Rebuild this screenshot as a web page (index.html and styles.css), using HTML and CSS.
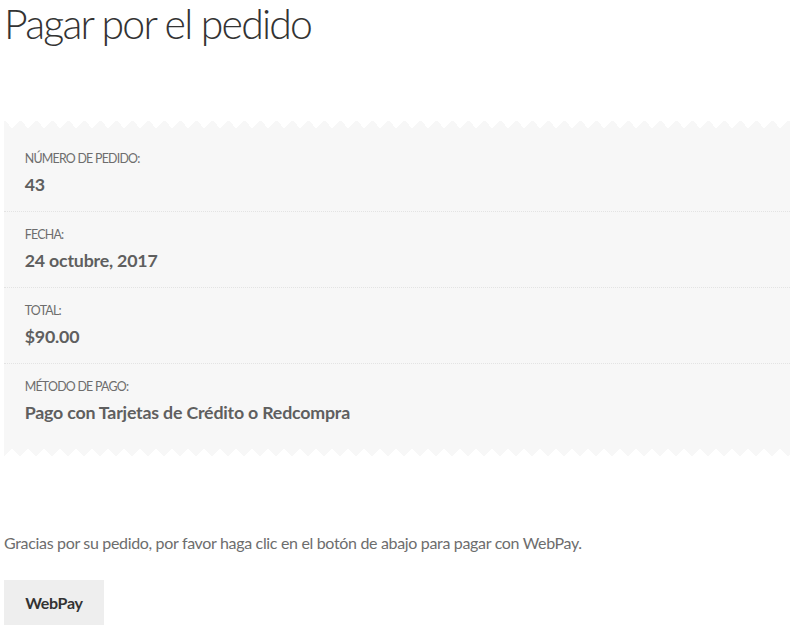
FILE: index.html
```html
<!DOCTYPE html>
<html lang="es">
<head>
<meta charset="utf-8">
<title>Pagar por el pedido</title>
<link rel="stylesheet" href="styles.css">
</head>
<body>
<main class="page">
  <h1 class="page-title">Pagar por el pedido</h1>
  <div class="order-box">
    <ul class="order-details">
      <li class="order-item">Número de pedido:<strong class="order-value">43</strong></li>
      <li class="order-item">Fecha:<strong class="order-value">24 octubre, 2017</strong></li>
      <li class="order-item">Total:<strong class="order-value">$90.00</strong></li>
      <li class="order-item">Método de pago:<strong class="order-value">Pago con Tarjetas de Crédito o Redcompra</strong></li>
    </ul>
  </div>
  <p class="thanks">Gracias por su pedido, por favor haga clic en el botón de abajo para pagar con WebPay.</p>
  <button class="pay-button" type="button">WebPay</button>
</main>
</body>
</html>
```
FILE: styles.css
```css
html, body {
  margin: 0;
  padding: 0;
  background: #ffffff;
}

body {
  font-family: Lato, "Open Sans", sans-serif;
  font-size: 16px;
  color: #6d6d6d;
}

.page {
  width: 786px;
  margin-left: 4px;
}

.page-title {
  margin: 0;
  font-family: Lato, sans-serif;
  font-weight: 300;
  font-size: 41px;
  line-height: 48px;
  letter-spacing: -1.8px;
  color: #333333;
}

.order-box {
  margin-top: 72px;
}

.order-box::before,
.order-box::after {
  content: "";
  display: block;
  height: 8px;
  background-repeat: repeat-x;
  background-size: 16px 8px;
}

.order-box::before {
  background-image: conic-gradient(from 135deg at 50% 0, #f7f7f7 90deg, transparent 0);
  background-position: 8px 0;
}

.order-box::after {
  background-image: conic-gradient(from -45deg at 50% 100%, #f7f7f7 90deg, transparent 0);
  background-position: -8px 0;
}

.order-details {
  margin: 0;
  padding: 8px 0 9px;
  list-style: none;
  background: #f7f7f7;
}

.order-item {
  padding: 12.8px 20.7px;
  font-size: 12.4px;
  line-height: 20.7px;
  letter-spacing: -0.75px;
  text-transform: uppercase;
  color: #6d6d6d;
  border-bottom: 1px dotted #e3e3e3;
}

.order-item:last-child {
  border-bottom: 0;
}

.order-value {
  display: block;
  font-size: 17.8px;
  line-height: 28.7px;
  font-weight: 700;
  letter-spacing: -0.2px;
  text-transform: none;
  color: #5f5f5f;
}

.thanks {
  margin: 74px 0 24px;
  line-height: 25.9px;
  letter-spacing: -0.33px;
}

.pay-button {
  display: flex;
  align-items: center;
  justify-content: center;
  width: 100px;
  height: 45px;
  padding: 0;
  border: 0;
  background: #eeeeee;
  font-family: Lato, sans-serif;
  font-size: 16px;
  font-weight: 700;
  letter-spacing: -0.3px;
  color: #333333;
}
```
